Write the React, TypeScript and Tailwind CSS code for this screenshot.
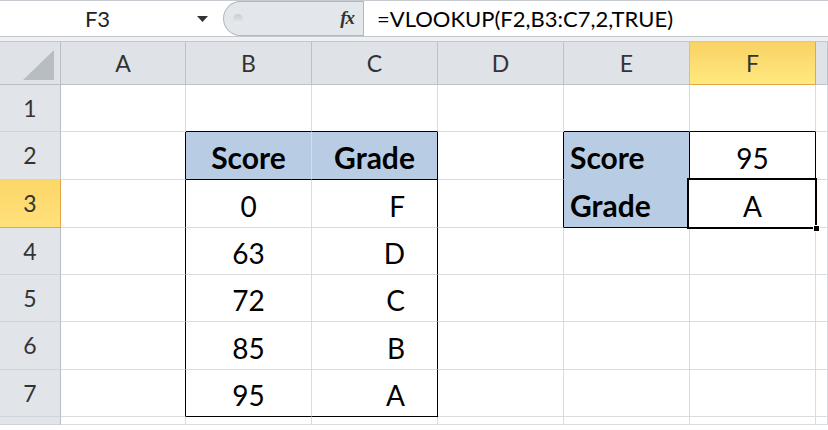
import React from "react";

type CellSpec = {
  text?: string;
  bold?: boolean;
  align?: "left" | "center" | "right";
  fill?: string;
  r?: string;
  b?: string;
  selected?: boolean;
};

const GRID = "border-[#d9dcdf]";

const cols = ["A", "B", "C", "D", "E", "F", ""];

// row data: A..G
const rows: CellSpec[][] = [
  [
    {},
    { b: "border-b-black" },
    { b: "border-b-black" },
    {},
    { b: "border-b-black" },
    { b: "border-b-black" },
    {},
  ],
  [
    { r: "border-r-black" },
    { text: "Score", bold: true, fill: "bg-[#b8cce4]", b: "border-b-black" },
    { text: "Grade", bold: true, fill: "bg-[#b8cce4]", b: "border-b-black", r: "border-r-black" },
    { r: "border-r-black" },
    { text: "Score", bold: true, align: "left", fill: "bg-[#b8cce4]", b: "border-b-[#b8cce4]", r: "border-r-black" },
    { text: "95", r: "border-r-black" },
    {},
  ],
  [
    { r: "border-r-black" },
    { text: "0" },
    { text: "F", align: "right", r: "border-r-black" },
    { r: "border-r-black" },
    { text: "Grade", bold: true, align: "left", fill: "bg-[#b8cce4]", b: "border-b-black", r: "border-r-black" },
    { text: "A", r: "border-r-black", b: "border-b-black", selected: true },
    {},
  ],
  [
    { r: "border-r-black" },
    { text: "63" },
    { text: "D", align: "right", r: "border-r-black" },
    {},
    {},
    {},
    {},
  ],
  [
    { r: "border-r-black" },
    { text: "72" },
    { text: "C", align: "right", r: "border-r-black" },
    {},
    {},
    {},
    {},
  ],
  [
    { r: "border-r-black" },
    { text: "85" },
    { text: "B", align: "right", r: "border-r-black" },
    {},
    {},
    {},
    {},
  ],
  [
    { r: "border-r-black" },
    { text: "95", b: "border-b-black" },
    { text: "A", align: "right", r: "border-r-black", b: "border-b-black" },
    {},
    {},
    {},
    {},
  ],
  [{}, {}, {}, {}, {}, {}, {}],
];

function Cell({ spec }: { spec: CellSpec }) {
  const align =
    spec.align === "left"
      ? "justify-start pl-[6px]"
      : spec.align === "right"
      ? "justify-end pr-[32px]"
      : "justify-center";
  return (
    <div
      className={`relative flex items-end pb-[7px] border-r border-b ${GRID} ${spec.r ?? ""} ${spec.b ?? ""} ${
        spec.fill ?? "bg-white"
      } ${align}`}
    >
      {spec.text && (
        <span className={`leading-none text-black ${spec.bold ? "text-[30px] font-bold" : "text-[28px]"}`}>
          {spec.text}
        </span>
      )}
      {spec.selected && (
        <>
          <div className="absolute z-10 -left-[3px] -top-[2px] -right-[2px] -bottom-[2px] border-2 border-black shadow-[inset_0_0_0_1px_#fff]" />
          <div className="absolute z-20 -right-[5px] -bottom-[5px] w-[7px] h-[7px] bg-black border border-white" />
        </>
      )}
    </div>
  );
}

function FormulaBar() {
  return (
    <div className="flex h-[36px] border-t border-[#c5cad0] bg-white">
      <div className="flex w-[223px] items-center">
        <span className="w-[195px] text-center text-[22px] text-[#222]">F3</span>
        <svg width="11" height="6" viewBox="0 0 11 6" className="ml-[2px]">
          <path d="M0 0 L11 0 L5.5 6 Z" fill="#333" />
        </svg>
      </div>
      <div className="flex w-[140px] items-center rounded-l-[18px] border border-r-0 border-[#b3b8be] bg-[#e3e6ea]">
        <div className="ml-[9px] h-[10px] w-[10px] rounded-full bg-gradient-to-b from-[#c9ccd0] to-[#eceef0]" />
        <span className="ml-auto mr-[9px] font-['Liberation_Serif',serif] text-[19px] italic font-bold text-[#333] tracking-[-1px]">
          fx
        </span>
      </div>
      <div className="flex flex-1 items-center border-l border-[#b3b8be] pl-[13px]">
        <span className="text-[22px] text-black">=VLOOKUP(F2,B3:C7,2,TRUE)</span>
      </div>
    </div>
  );
}

export default function App() {
  return (
    <div className="h-[430px] w-[828px] overflow-hidden bg-white font-['Lato',sans-serif]">
      <FormulaBar />
      <div className="h-[6px] border-t border-b border-[#c3c8ce] bg-[#eef0f3]" />
      <div className="grid grid-cols-[61px_125px_126px_126px_126px_126px_126px_1fr] grid-rows-[43px_47px_48px_48px_47px_47px_48px_47px_1fr]">
        {/* corner */}
        <div className="flex items-end justify-end border-r border-b border-[#b9bfc6] bg-[#dfe3e8] pb-[4px] pr-[6px]">
          <svg width="31" height="30" viewBox="0 0 31 30">
            <path d="M31 0 L31 30 L0 30 Z" fill="#b8bdc3" />
          </svg>
        </div>
        {cols.map((c, i) =>
          c === "F" ? (
            <div
              key={i}
              className="flex items-center justify-center border-r border-b border-[#e3a746] bg-gradient-to-b from-[#f9d264] to-[#ffe97f] text-[23px] text-[#333]"
            >
              {c}
            </div>
          ) : (
            <div
              key={i}
              className="flex items-center justify-center border-r border-b border-[#bcc2c9] bg-[#dfe3e8] text-[23px] text-[#333]"
            >
              {c}
            </div>
          )
        )}
        {rows.map((row, ri) => (
          <React.Fragment key={ri}>
            {ri === 2 ? (
              <div className="flex items-center justify-center border-r border-b border-[#e3a746] bg-gradient-to-b from-[#fcd668] to-[#ffe17a] text-[23px] text-[#333]">
                {ri + 1}
              </div>
            ) : (
              <div className="flex items-center justify-center border-r border-b border-r-[#b9bfc6] border-b-[#cfd3d8] bg-[#e1e4e8] text-[23px] text-[#333]">
                {ri < 7 ? ri + 1 : ""}
              </div>
            )}
            {row.map((spec, ci) => (
              <Cell key={ci} spec={spec} />
            ))}
          </React.Fragment>
        ))}
      </div>
    </div>
  );
}
